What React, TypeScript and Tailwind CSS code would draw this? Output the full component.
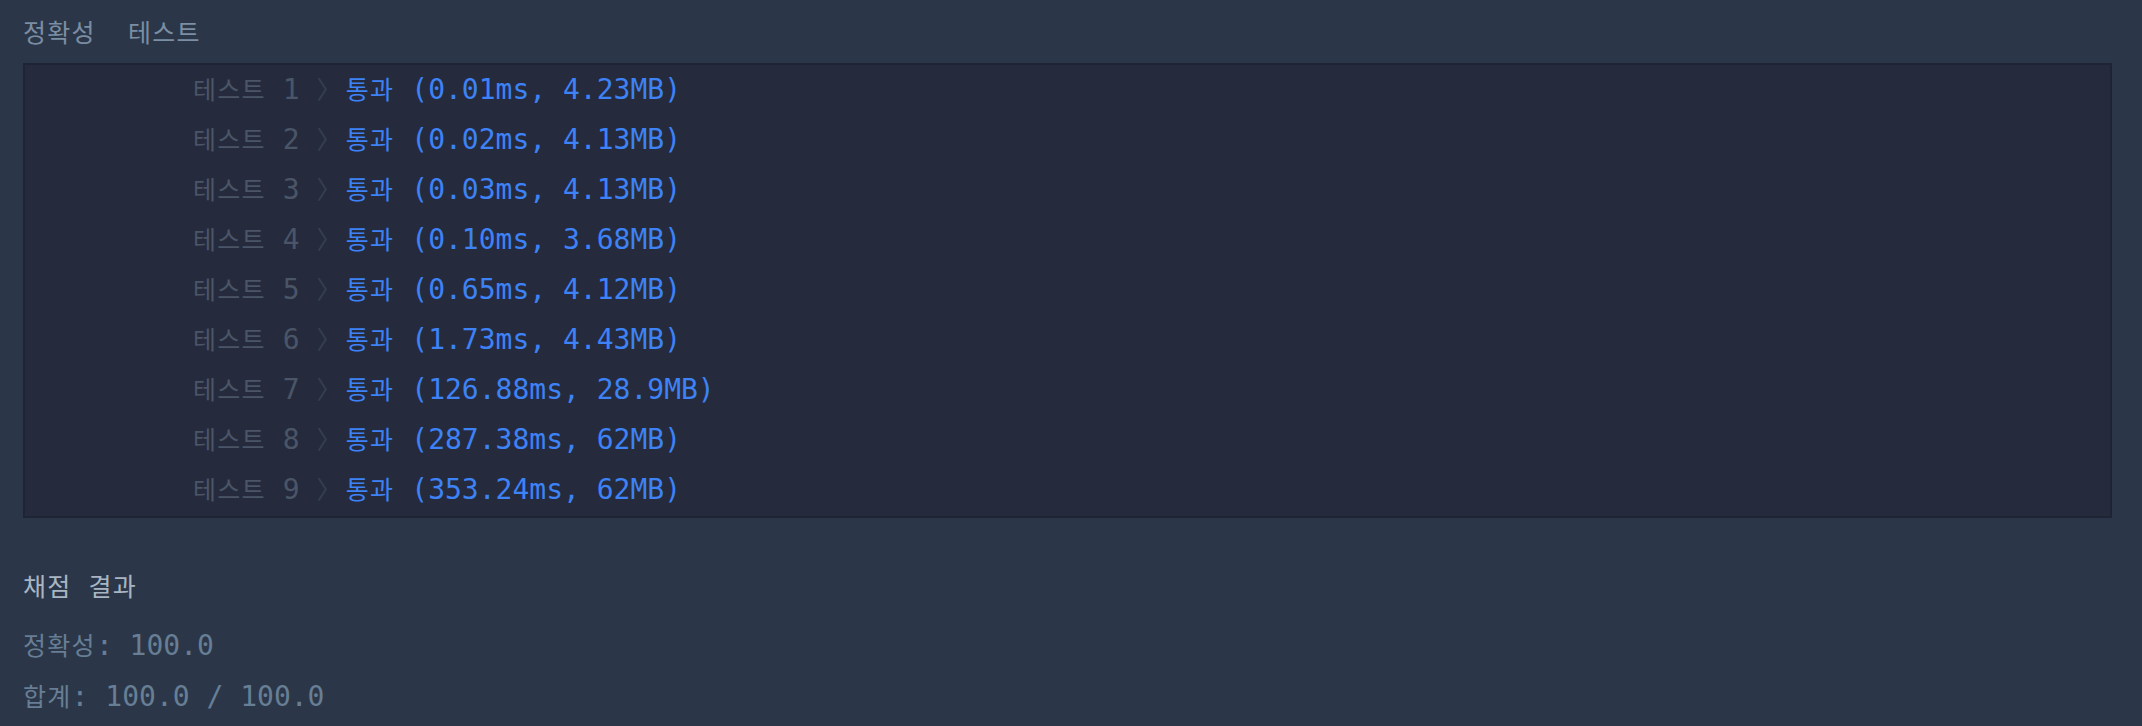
const results = [
  { n: 1, time: "0.01ms", mem: "4.23MB" },
  { n: 2, time: "0.02ms", mem: "4.13MB" },
  { n: 3, time: "0.03ms", mem: "4.13MB" },
  { n: 4, time: "0.10ms", mem: "3.68MB" },
  { n: 5, time: "0.65ms", mem: "4.12MB" },
  { n: 6, time: "1.73ms", mem: "4.43MB" },
  { n: 7, time: "126.88ms", mem: "28.9MB" },
  { n: 8, time: "287.38ms", mem: "62MB" },
  { n: 9, time: "353.24ms", mem: "62MB" },
];

// hangul runs are set a little smaller so they match the reference's fallback font
function K({ children }: { children: React.ReactNode }) {
  return <span className="text-[25px] tracking-[1.3px]">{children}</span>;
}

export default function App() {
  return (
    <div className="min-h-screen w-full bg-[#2b3748] font-['DejaVu_Sans_Mono','Noto_Sans_CJK_KR',monospace] text-[28px]">
      {/* Tabs */}
      <div className="flex h-[63px] items-center pl-[23px] font-['Noto_Sans_CJK_KR',sans-serif] text-[25px] tracking-[1.3px] text-[#7b8ea4]">
        <span>정확성</span>
        <span className="ml-[32px]">테스트</span>
      </div>

      {/* Output console */}
      <div className="ml-[23px] mr-[30px] border-2 border-[#1d2433] bg-[#252b3d] pb-[1px]">
        {results.map((r) => (
          <div key={r.n} className="flex h-[50px] items-center whitespace-pre pl-[168px] leading-[50px]">
            <span className="text-[#4a5567]">
              <K>테스트</K> {r.n} <span className="text-[#363f51]"><K>〉</K></span>
            </span>
            <span className="ml-[3px] text-[#3d82f6]">
              <K>통과</K> ({r.time}, {r.mem})
            </span>
          </div>
        ))}
      </div>

      {/* Summary */}
      <div className="mt-[44px] whitespace-pre pl-[23px] leading-[50px]">
        <div className="text-[#a9b5c3]">
          <K>채점</K> <K>결과</K>
        </div>
        <div className="mt-[8px] text-[#677e95]">
          <K>정확성</K>: 100.0
        </div>
        <div className="text-[#677e95]">
          <K>합계</K>: 100.0 / 100.0
        </div>
      </div>
    </div>
  );
}
